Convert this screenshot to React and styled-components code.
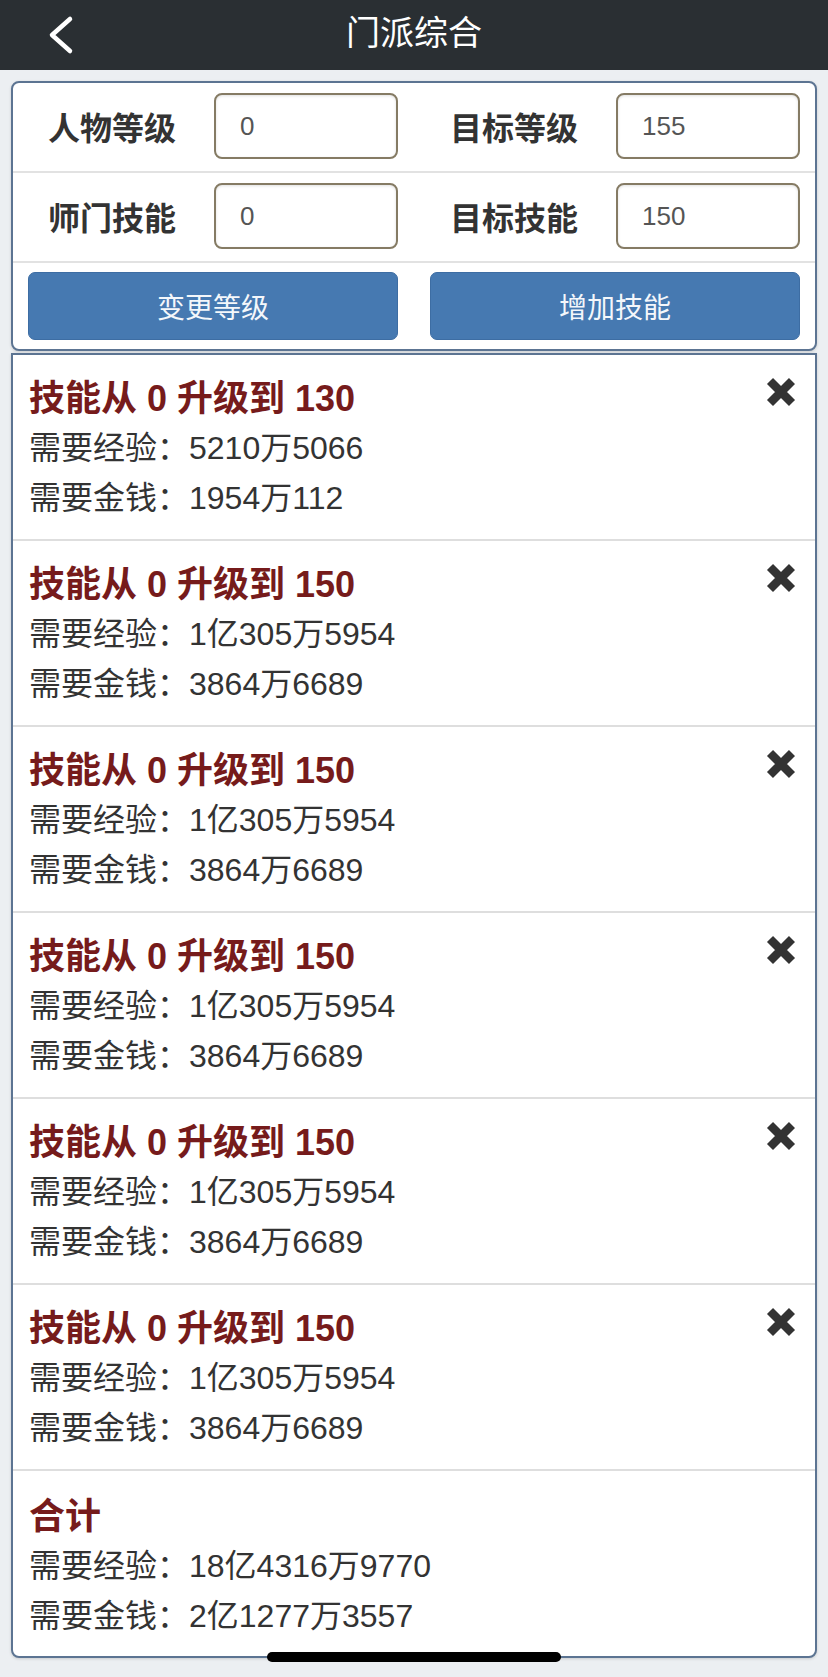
import React from 'react'
import styled, { createGlobalStyle } from 'styled-components'

const GlobalStyle = createGlobalStyle`
  body {
    margin: 0;
    background: #eceff2;
    font-family: "Liberation Sans", "Noto Sans CJK SC", sans-serif;
  }
`

const skills = [
  { from: 0, to: 130, exp: '5210万5066', money: '1954万112' },
  { from: 0, to: 150, exp: '1亿305万5954', money: '3864万6689' },
  { from: 0, to: 150, exp: '1亿305万5954', money: '3864万6689' },
  { from: 0, to: 150, exp: '1亿305万5954', money: '3864万6689' },
  { from: 0, to: 150, exp: '1亿305万5954', money: '3864万6689' },
  { from: 0, to: 150, exp: '1亿305万5954', money: '3864万6689' },
]

function BackIcon() {
  return (
    <svg width="30" height="40" viewBox="0 0 30 40">
      <path d="M24 4 L6 20 L24 36" fill="none" stroke="#fff" strokeWidth="4.5" strokeLinecap="round" strokeLinejoin="round" />
    </svg>
  )
}

function CloseIcon() {
  return (
    <svg width="32" height="30" viewBox="0 0 32 30">
      <path d="M5 4 L27 26 M27 4 L5 26" stroke="#333" strokeWidth="8.5" />
    </svg>
  )
}

function App() {
  return (
    <>
      <GlobalStyle />
      <Header>
        <BackButton><BackIcon /></BackButton>
        <Title>门派综合</Title>
        <span />
      </Header>

      <Main>
        <FormCard>
          <FormRow>
            <Field>
              <Label>人物等级</Label>
              <Input defaultValue="0" />
            </Field>
            <Field>
              <Label>目标等级</Label>
              <Input defaultValue="155" />
            </Field>
          </FormRow>
          <FormRow>
            <Field>
              <Label>师门技能</Label>
              <Input defaultValue="0" />
            </Field>
            <Field>
              <Label>目标技能</Label>
              <Input defaultValue="150" />
            </Field>
          </FormRow>
          <ButtonRow>
            <ActionButton>变更等级</ActionButton>
            <ActionButton>增加技能</ActionButton>
          </ButtonRow>
        </FormCard>

        <ListCard>
          {skills.map((s, i) => (
            <Item key={i}>
              <ItemHead>
                <ItemTitle>技能从 {s.from} 升级到 {s.to}</ItemTitle>
                <RemoveButton><CloseIcon /></RemoveButton>
              </ItemHead>
              <Line>需要经验：{s.exp}</Line>
              <Line>需要金钱：{s.money}</Line>
            </Item>
          ))}
          <Total>
            <ItemTitle>合计</ItemTitle>
            <Line>需要经验：18亿4316万9770</Line>
            <Line>需要金钱：2亿1277万3557</Line>
          </Total>
        </ListCard>
      </Main>

      <HomeIndicator />
    </>
  )
}

export default App

const Header = styled.header`
  height: 70px;
  background: #2a2f33;
  display: grid;
  grid-template-columns: 1fr auto 1fr;
  align-items: center;
`

const BackButton = styled.div`
  padding-left: 46px;
  display: flex;
  align-items: center;
  height: 100%;
`

const Title = styled.h1`
  margin: 0;
  color: #fff;
  font-size: 34px;
  font-weight: normal;
  line-height: 50px;
  padding-bottom: 4px;
`

const Main = styled.main`
  padding: 11px 11px 20px;
`

const FormCard = styled.section`
  background: #fff;
  border: 2px solid #5c7492;
  border-radius: 8px;
  box-shadow: 0 1px 3px rgba(0, 0, 0, 0.15);
`

const FormRow = styled.div`
  display: grid;
  grid-template-columns: 1fr 1fr;
  column-gap: 32px;
  padding: 10px 15px 12px;
  border-bottom: 2px solid #e2e2e2;
`

const Field = styled.div`
  display: flex;
  align-items: center;
`

const Label = styled.label`
  flex: 1;
  padding-left: 20px;
  font-size: 32px;
  font-weight: bold;
  color: #333;
`

const Input = styled.input`
  box-sizing: border-box;
  width: 184px;
  height: 66px;
  padding: 0 24px;
  border: 2px solid #857b64;
  border-radius: 8px;
  box-shadow: inset 0 1px 3px rgba(0, 0, 0, 0.12);
  background: #fff;
  font-family: "Liberation Sans", sans-serif;
  font-size: 26px;
  color: #555;
  outline: none;
`

const ButtonRow = styled.div`
  display: grid;
  grid-template-columns: 1fr 1fr;
  column-gap: 32px;
  padding: 9px 15px;
`

const ActionButton = styled.button`
  height: 68px;
  border: 1px solid #3d6da3;
  border-radius: 7px;
  background: #4679b1;
  color: #f4f7fb;
  font-family: "Liberation Sans", "Noto Sans CJK SC", sans-serif;
  font-size: 28px;
`

const ListCard = styled.section`
  margin-top: 2px;
  background: #fff;
  border: 2px solid #5c7492;
  border-radius: 0 0 8px 8px;
  box-shadow: 0 1px 3px rgba(0, 0, 0, 0.15);
`

const Item = styled.div`
  padding: 20px 18px 16px 16px;
  border-bottom: 2px solid #dedede;
`

const ItemHead = styled.div`
  display: flex;
  justify-content: space-between;
  align-items: flex-start;
`

const ItemTitle = styled.div`
  font-size: 36px;
  font-weight: bold;
  line-height: 48px;
  color: #761b1b;
`

const RemoveButton = styled.div`
  margin-top: 2px;
  display: flex;
`

const Line = styled.div`
  font-size: 32px;
  line-height: 50px;
  color: #333;
`

const Total = styled.div`
  padding: 22px 16px 15px;
`

const HomeIndicator = styled.div`
  position: fixed;
  left: 50%;
  bottom: 15px;
  width: 294px;
  height: 10px;
  margin-left: -147px;
  border-radius: 5px;
  background: #000;
`
